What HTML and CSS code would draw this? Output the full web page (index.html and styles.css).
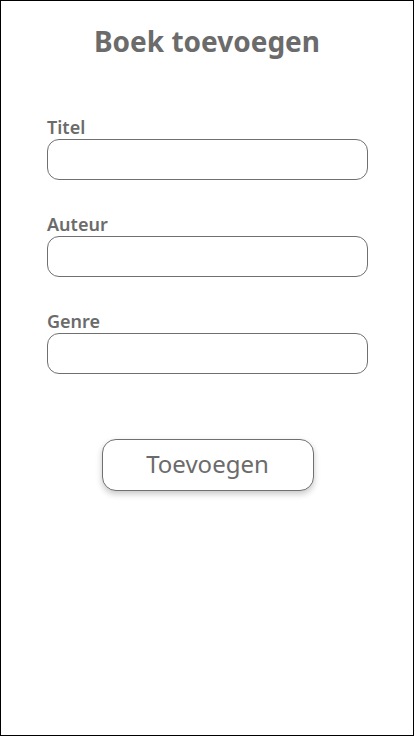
FILE: index.html
```html
<!DOCTYPE html>
<html lang="nl">
<head>
<meta charset="utf-8">
<link rel="stylesheet" href="styles.css">
</head>
<body>
<div class="screen">
  <h1 class="title">Boek toevoegen</h1>
  <form class="form">
    <label class="field">
      <span class="label">Titel</span>
      <input class="input" type="text">
    </label>
    <label class="field">
      <span class="label">Auteur</span>
      <input class="input" type="text">
    </label>
    <label class="field">
      <span class="label">Genre</span>
      <input class="input" type="text">
    </label>
    <div class="actions">
      <button class="button" type="button">Toevoegen</button>
    </div>
  </form>
</div>
</body>
</html>
```
FILE: styles.css
```css
html, body {
  margin: 0;
  padding: 0;
  background: #fff;
}
.screen {
  box-sizing: border-box;
  width: 414px;
  height: 736px;
  border: 1px solid #000;
  font-family: "Noto Sans", "Open Sans", sans-serif;
  color: #6b6b6b;
  display: flex;
  flex-direction: column;
}
.title {
  margin: 21px 0 0;
  font-size: 28px;
  line-height: 38px;
  font-weight: 700;
  text-align: center;
  color: #6b6b6b;
}
.form {
  display: flex;
  flex-direction: column;
  padding: 0 45px 0 46px;
  margin-top: 55px;
}
.field {
  display: flex;
  flex-direction: column;
  margin-bottom: 32px;
}
.label {
  font-size: 18px;
  line-height: 24px;
  font-weight: 600;
  color: #6b6b6b;
}
.input {
  box-sizing: border-box;
  height: 41px;
  border: 1px solid #707070;
  border-radius: 12px;
  background: #fff;
  margin: 0;
  padding: 0 12px;
  font-family: inherit;
  font-size: 16px;
  outline: none;
}
.actions {
  display: flex;
  justify-content: center;
  margin-top: 33px;
}
.button {
  box-sizing: border-box;
  width: 212px;
  height: 52px;
  border: 1px solid #707070;
  border-radius: 14px;
  background: #fff;
  font-family: inherit;
  font-size: 24px;
  color: #6b6b6b;
  box-shadow: 0 3px 6px rgba(0,0,0,0.22);
  cursor: pointer;
  padding: 0 0 4px;
}
```
